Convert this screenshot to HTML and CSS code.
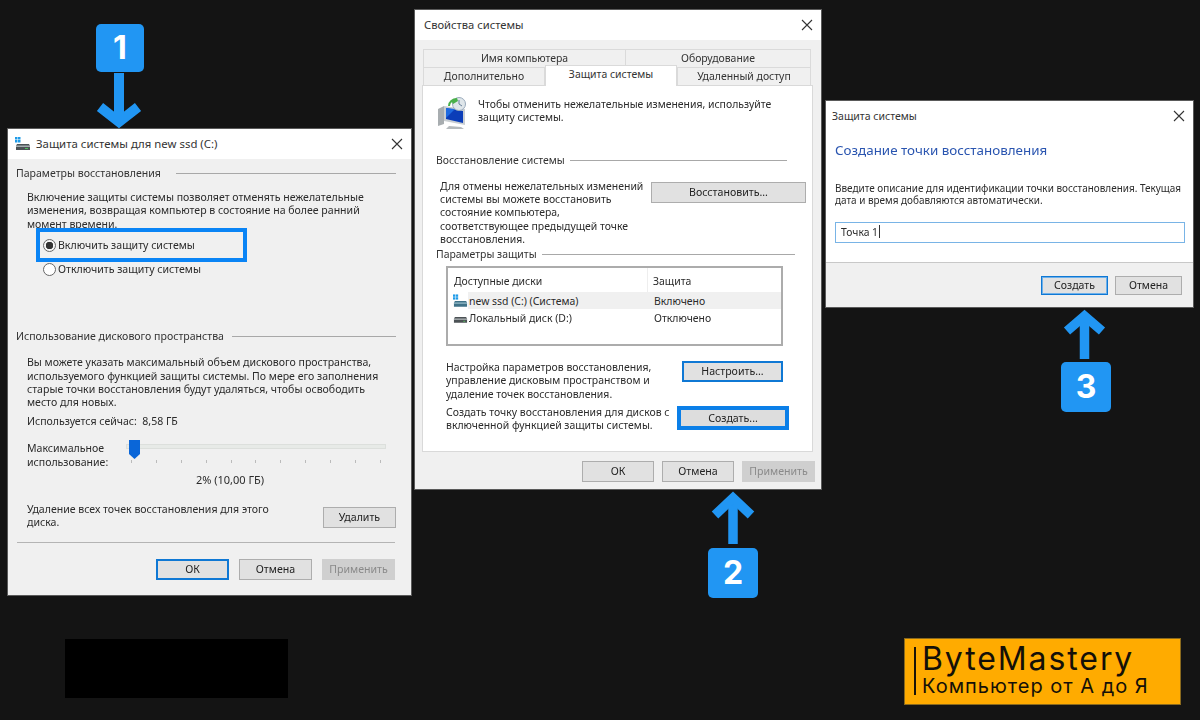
FILE: index.html
```html
<!DOCTYPE html>
<html lang="ru">
<head>
<meta charset="utf-8">
<title>Точка восстановления</title>
<link rel="stylesheet" href="styles.css">
</head>
<body>
<main class="canvas">

  <section class="win win-a">
    <header class="titlebar">
      <svg class="tb-icon" viewBox="0 0 16 14"><rect x="0" y="0" width="2.500" height="2.500" fill="#1e9be8"/><rect x="3" y="0" width="2.500" height="2.500" fill="#1e9be8"/><rect x="0" y="3" width="2.500" height="2.500" fill="#1e9be8"/><rect x="3" y="3" width="2.500" height="2.500" fill="#1e9be8"/><path d="M2 7h12l1 2v4H1V9z" fill="#4a5256"/><rect x="1" y="8.500" width="14" height="1.500" fill="#a4adb0"/><rect x="10" y="11" width="3" height="1" fill="#49c05a"/></svg>
      <span class="tb-title">Защита системы для new ssd (C:)</span>
      <svg class="close" viewBox="0 0 12 12"><path d="M1 1l10 10M11 1L1 11"/></svg>
    </header>
    <div class="body-a">
      <div class="group a-g1"><span>Параметры восстановления</span><i></i></div>
      <p class="txt a-p1">Включение защиты системы позволяет отменять нежелательные<br>изменения, возвращая компьютер в состояние на более ранний<br>момент времени.</p>
      <div class="radio a-r1"><b class="dot on"></b>Включить защиту системы</div>
      <div class="radio a-r2"><b class="dot"></b>Отключить защиту системы</div>
      <div class="group a-g2"><span>Использование дискового пространства</span><i></i></div>
      <p class="txt a-p2">Вы можете указать максимальный объем дискового пространства,<br>используемого функцией защиты системы. По мере его заполнения<br>старые точки восстановления будут удаляться, чтобы освободить<br>место для новых.</p>
      <p class="txt a-used">Используется сейчас:&nbsp;&nbsp;8,58 ГБ</p>
      <div class="slider-row">
        <p class="txt slider-label">Максимальное<br>использование:</p>
        <div class="slider">
          <div class="track"></div>
          <svg class="thumb" viewBox="0 0 11 19"><path d="M0 0h11v14l-5.500 5L0 14z"/></svg>
          <div class="ticks"><i></i><i></i><i></i><i></i><i></i><i></i><i></i><i></i><i></i><i></i><i></i></div>
        </div>
      </div>
      <p class="txt a-pct">2% (10,00 ГБ)</p>
      <div class="del-row">
        <p class="txt del-text">Удаление всех точек восстановления для этого<br>диска.</p>
        <button class="btn del">Удалить</button>
      </div>
      <div class="sep"></div>
      <div class="foot a-foot">
        <button class="btn focus w73">ОК</button>
        <button class="btn w73">Отмена</button>
        <button class="btn off w73">Применить</button>
      </div>
    </div>
  </section>

  <section class="win win-b">
    <header class="titlebar">
      <span class="tb-title plain">Свойства системы</span>
      <svg class="close" viewBox="0 0 12 12"><path d="M1 1l10 10M11 1L1 11"/></svg>
    </header>
    <div class="body-b">
      <div class="tabs tabs-top">
        <div class="tab t1">Имя компьютера</div>
        <div class="tab t2">Оборудование</div>
      </div>
      <div class="tabs tabs-low">
        <div class="tab t3">Дополнительно</div>
        <div class="tab active">Защита системы</div>
        <div class="tab t4">Удаленный доступ</div>
      </div>
      <div class="panel">
        <div class="intro">
          <svg class="sys-icon" viewBox="0 0 31 32">
            <path d="M1 12l6-3v18l-6 2z" fill="#a8adb0"/>
            <path d="M7 9l21 3v16L7 24z" fill="#c9ced2"/>
            <path d="M9 11l17 3v12L9 22z" fill="#0b3db8"/>
            <path d="M9 11l9 1-9 9z" fill="#1e6ae0"/>
            <path d="M12 29l12 1 3 2H9z" fill="#b5babd"/>
            <circle cx="22" cy="7" r="6.500" fill="#dfe6ea" stroke="#9ab" stroke-width="1"/>
            <path d="M22 3v4l3 2" stroke="#68809a" fill="none"/>
            <path d="M11 9a9 8 0 0 1 9-8l1 3-5 3-1-2a5 5 0 0 0-2 4z" fill="#49b04a"/>
          </svg>
          <p class="txt intro-text">Чтобы отменить нежелательные изменения, используйте<br>защиту системы.</p>
        </div>
        <div class="group b-g1"><span>Восстановление системы</span><i></i></div>
        <div class="restore-row">
          <p class="txt lh13">Для отмены нежелательных изменений<br>системы вы можете восстановить<br>состояние компьютера,<br>соответствующее предыдущей точке<br>восстановления.</p>
          <button class="btn restore">Восстановить...</button>
        </div>
        <div class="group b-g2"><span>Параметры защиты</span><i></i></div>
        <div class="list">
          <div class="list-head"><span class="col1">Доступные диски</span><span class="col2">Защита</span></div>
          <div class="list-row">
            <svg class="drive" viewBox="0 0 16 14"><rect x="0" y="0" width="2.500" height="2.500" fill="#1e9be8"/><rect x="3" y="0" width="2.500" height="2.500" fill="#1e9be8"/><rect x="0" y="3" width="2.500" height="2.500" fill="#1e9be8"/><rect x="3" y="3" width="2.500" height="2.500" fill="#1e9be8"/><path d="M2 7h12l1 2v4H1V9z" fill="#3f7288"/><rect x="1" y="8.500" width="14" height="1.500" fill="#8fb6c4"/></svg>
            <div class="cells sel"><span class="cell1">new ssd (C:) (Система)</span><span>Включено</span></div>
          </div>
          <div class="list-row">
            <svg class="drive" viewBox="0 0 16 14"><path d="M2 6h12l1 2v4H1V8z" fill="#4c5255"/><rect x="1" y="7.500" width="14" height="1.500" fill="#a8adb0"/><rect x="11" y="10" width="2" height="1" fill="#55c060"/></svg>
            <div class="cells"><span class="cell1">Локальный диск (D:)</span><span>Отключено</span></div>
          </div>
        </div>
        <div class="cfg-row">
          <p class="txt">Настройка параметров восстановления,<br>управление дисковым пространством и<br>удаление точек восстановления.</p>
          <button class="btn cfg">Настроить...</button>
        </div>
        <div class="create-row">
          <p class="txt">Создать точку восстановления для дисков с<br>включенной функцией защиты системы.</p>
          <button class="btn create">Создать...</button>
        </div>
      </div>
      <div class="foot b-foot">
        <button class="btn w72">ОК</button>
        <button class="btn w72">Отмена</button>
        <button class="btn off w73">Применить</button>
      </div>
    </div>
  </section>

  <section class="win win-c">
    <header class="titlebar">
      <span class="tb-title plain-c">Защита системы</span>
      <svg class="close" viewBox="0 0 12 12"><path d="M1 1l10 10M11 1L1 11"/></svg>
    </header>
    <div class="c-main">
      <h1 class="c-head">Создание точки восстановления</h1>
      <p class="txt c-p">Введите описание для идентификации точки восстановления. Текущая<br>дата и время добавляются автоматически.</p>
      <div class="field">Точка 1<span class="caret"></span></div>
    </div>
    <div class="foot c-foot">
      <button class="btn focus-thin c-btn">Создать</button>
      <button class="btn c-btn">Отмена</button>
    </div>
  </section>

  <div class="hl"></div>

  <svg class="arrows" viewBox="0 0 1200 720">
    <path d="M119 73v49M100 107l19 15 19-15"/>
    <path d="M733 544V498" class="thin"/><path d="M715 515l18-17 18 17" class="thin"/>
    <path d="M1084.500 359V316" class="thin"/><path d="M1067 331l17.500-15 17.500 15" class="thin"/>
  </svg>
  <div class="badge b1">1</div>
  <div class="badge b2">2</div>
  <div class="badge b3">3</div>

  <div class="blackout"></div>

  <div class="logo">
    <i class="logo-bar"></i>
    <div class="logo-text">
      <div class="logo-name">ByteMastery</div>
      <div class="logo-sub">Компьютер от А до Я</div>
    </div>
  </div>
</main>
</body>
</html>
```

FILE: styles.css
```css
* { box-sizing: border-box; }
html, body { margin: 0; height: 100%; background: #141414; overflow: hidden; }
.canvas {
  position: relative; width: 1200px; height: 720px; background: #141414;
  font-family: "Noto Sans", "Liberation Sans", sans-serif; color: #2b2b2b;
}
p { margin: 0; }
.win {
  position: absolute; display: flex; flex-direction: column;
  background: #f0f0f0; box-shadow: 0 0 0 1px #5a5a5a;
  font-size: 10.550px; filter: blur(.45px);
}
.win-a { left: 8px; top: 129px; width: 403px; height: 466px; }
.win-b { left: 415px; top: 10px; width: 406px; height: 479px; font-size: 10.450px; }
.win-c { left: 826px; top: 101px; width: 367px; height: 206px; background: #fff; }

.titlebar { flex: none; height: 30px; background: #fff; display: flex; align-items: center; padding: 0 8px 1px 7px; }
.tb-icon { width: 16px; height: 14px; margin-right: 5px; }
.tb-title { font-size: 11.400px; flex: 1; color: #333; }
.plain { padding-left: 2px; font-size: 11.200px; }
.plain-c { font-size: 10.500px; margin-left: -1px; }
.close { width: 12px; height: 12px; }
.close path { stroke: #333; stroke-width: 1.100; fill: none; }

.txt { line-height: 13.400px; white-space: nowrap; }
.lh13 { line-height: 13.200px; padding-top: 1px; }

.group { display: flex; align-items: center; height: 14px; line-height: 14px; gap: 8px; color: #333; }
.group i { flex: 1; height: 1px; background: #a8a8a8; }

.body-a { flex: 1; padding: 7px 15px 0 8px; }
.a-g1 { gap: 15px; }
.a-p1 { margin: 11px 0 0 11px; }
.radio { display: flex; align-items: center; height: 14px; margin: 7px 0 0 27px; line-height: 14px; }
.a-r2 { margin-top: 10px; }
.dot { width: 13px; height: 13px; border-radius: 50%; border: 1px solid #666; background: #fff; margin-right: 2px; position: relative; flex: none; }
.dot.on { background: radial-gradient(circle, #333 0 3.500px, #f5f5f5 4px); }
.a-g2 { margin-top: 53px; gap: 8px; }
.a-p2 { margin: 13px 0 0 11px; }
.a-used { margin: 5px 0 0 11px; }
.slider-row { display: flex; margin: 12px 0 0 11px; height: 27px; }
.slider-label { width: 99px; flex: none; padding-top: 2px; }
.slider { position: relative; width: 260px; }
.track { height: 5px; margin-top: 4px; background: #e7eae7; border: 1px solid #dcdfdc; }
.thumb { position: absolute; left: 3px; top: 0; width: 11px; height: 19px; }
.thumb path { fill: #0a66d8; }
.ticks { display: flex; justify-content: space-between; padding: 0 5px; margin-top: 11px; }
.ticks i { width: 1px; height: 3px; background: #bbb; }
.a-pct { margin: 6px 0 0 110px; width: 208px; text-align: center; font-size: 11px; }
.del-row { display: flex; justify-content: space-between; margin: 14px 0 0 11px; height: 27px; }
.del-text { padding-top: 2px; }
.sep { height: 1px; background: #b4b4b4; margin: 14px 1px 0 1px; }

.btn {
  display: block; flex: none; height: 21px; padding: 0; background: #e1e1e1; border: 1px solid #adadad;
  font: 10.600px/1 "Noto Sans", "Liberation Sans", sans-serif; color: #222; text-align: center;
}
.w72 { width: 72px; }
.w73 { width: 73px; }
.focus { border: 2px solid #0f78d4; }
.off { background: #cfcfcf; border-color: #cfcfcf; color: #8a8a8a; }
.del { width: 73px; margin-top: 6px; }
.foot { display: flex; justify-content: flex-end; }
.a-foot { margin-top: 16px; gap: 10px; padding-right: 1px; }

.body-b { flex: 1; }
.tabs { display: flex; margin-left: 8px; width: 388px; height: 18px; }
.tabs-top { margin-top: 9px; }
.tab { background: #f0f0f0; border: 1px solid #dadada; border-bottom: 0; text-align: center; line-height: 16px; color: #333; }
.t1 { width: 203px; }
.t2 { width: 185px; border-left: 0; }
.t3 { width: 122px; }
.t4 { width: 134px; }
.tab.active { width: 132px; height: 21px; margin-top: -2px; background: #fff; line-height: 17px; position: relative; z-index: 1; border-color: #dadada; }
.panel { width: 391px; height: 367px; margin-left: 7px; background: #fff; border: 1px solid #d9d9d9; padding: 11px 0 0 13px; }
.intro { display: flex; gap: 11px; margin-left: 1px; height: 31px; }
.intro-text { padding-top: 1px; margin-left: -1px; }
.sys-icon { width: 31px; height: 32px; flex: none; }
.b-g1 { margin-top: 25px; width: 351px; gap: 5px; }
.restore-row { display: flex; justify-content: space-between; margin-top: 12px; margin-left: 4px; width: 366px; height: 67px; }
.restore { width: 155px; margin-top: 3px; }
.b-g2 { margin-top: 1px; width: 359px; gap: 5px; }
.list { width: 337px; height: 80px; margin: 5px 0 0 10px; border: 2px solid #acacac; background: #fff; }
.list-head { display: flex; height: 24px; line-height: 26px; margin-right: 1px; }
.col1 { width: 200px; padding-left: 6px; border-right: 1px solid #eee; }
.col2 { padding-left: 5px; }
.list-row { display: flex; align-items: center; height: 17px; padding-left: 5px; }
.drive { width: 15px; height: 14px; flex: none; }
.cells { flex: 1; display: flex; height: 17px; line-height: 19px; padding-left: 1px; }
.cell1 { width: 185px; }
.sel { background: #f0f0f0; }
.cfg-row { display: flex; justify-content: space-between; margin: 15px 0 0 10px; width: 337px; height: 40px; }
.cfg { width: 101px; height: 21px; margin-top: 0; border: 2px solid #0f78d4; }
.create-row { display: flex; justify-content: space-between; margin: 5px 0 0 10px; width: 343px; }
.create { width: 112px; height: 24px; margin-top: 0; border: 4px solid #0b7fe8; background: #ddd; }
.b-foot { margin-top: 9px; gap: 8px; padding-right: 6px; }

.c-main { flex: 1; padding: 10px 9px 0 9px; }
.c-head { margin: 0; font-size: 13.400px; line-height: 18px; font-weight: 400; color: #2a55b0; }
.c-p { margin-top: 23px; font-size: 9.950px; line-height: 12.400px; }
.field { height: 21px; width: 350px; margin-top: 15px; border: 1px solid #79b4e6; background: #fff; font-size: 10.300px; line-height: 19px; padding-left: 5px; }
.caret { display: inline-block; width: 1px; height: 13px; background: #333; vertical-align: -2px; margin-left: 1px; }
.c-foot { flex: none; height: 45px; background: #f0f0f0; border-top: 1px solid #c8c8c8; gap: 7px; padding: 13px 11px 0 0; }
.c-btn { width: 67px; height: 19px; font-size: 10.500px; }
.focus-thin { border: 1px solid #0f78d4; box-shadow: inset 0 0 0 1px #6db0ea; }

.hl { position: absolute; left: 36px; top: 228px; width: 211px; height: 34px; border: 4px solid #0a84f5; }
.arrows { position: absolute; left: 0; top: 0; width: 1200px; height: 720px; pointer-events: none; }
.arrows path { fill: none; stroke: #2196f3; stroke-width: 10; }
.arrows path.thin { stroke-width: 9.500; }
.badge {
  position: absolute; width: 50px; height: 50px; border-radius: 5px; background: #2196f3;
  color: #fff; font: 700 32px/50px "Inter", "Roboto", sans-serif; text-align: center;
}
.b1 { left: 96px; top: 24px; width: 48px; height: 48px; line-height: 48px; }
.b2 { left: 708px; top: 548px; }
.b3 { left: 1061px; top: 362px; }
.blackout { position: absolute; left: 65px; top: 639px; width: 223px; height: 59px; background: #000; }
.logo {
  position: absolute; left: 904px; top: 638px; width: 277px; height: 67px;
  background: #ffab00; border: 1px solid #8a6a1e; display: flex; padding: 8px 0 0 9px; color: #141008;
}
.logo-bar { flex: none; width: 2px; height: 48px; background: #1a1408; margin-right: 6px; }
.logo-name { font: 400 32px/30px "Inter", sans-serif; letter-spacing: 1.900px; margin-top: -3px; white-space: nowrap; }
.logo-sub { font: 400 20px/20px "Inter", sans-serif; letter-spacing: 1px; margin-top: 2px; white-space: nowrap; }
```
